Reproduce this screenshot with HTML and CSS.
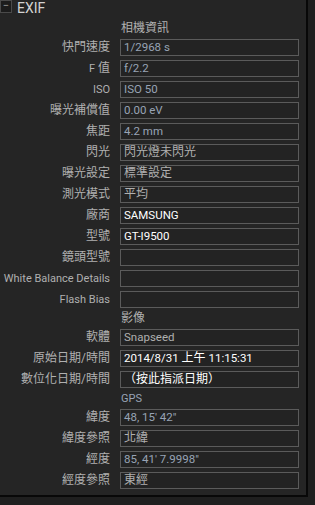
FILE: index.html
```html
<!DOCTYPE html>
<html lang="zh-Hant">
<head>
    <meta charset="UTF-8">
    <title>EXIF</title>
    <link rel="stylesheet" href="styles.css">
</head>
<body>
    <div class="panel">
        <div class="panel-head">
            <span class="toggle">&minus;</span>
            <span class="panel-title">EXIF</span>
        </div>

        <div class="fields">
            <div class="row group-row"><span class="label"></span><span class="group">相機資訊</span></div>
            <div class="row"><span class="label">快門速度</span><span class="box ro">1/2968 s</span></div>
            <div class="row"><span class="label"><span class="en">F</span> 值</span><span class="box ro">f/2.2</span></div>
            <div class="row"><span class="label en">ISO</span><span class="box ro">ISO 50</span></div>
            <div class="row"><span class="label">曝光補償值</span><span class="box ro">0.00 eV</span></div>
            <div class="row"><span class="label">焦距</span><span class="box ro">4.2 mm</span></div>
            <div class="row"><span class="label">閃光</span><span class="box zh">閃光燈未閃光</span></div>
            <div class="row"><span class="label">曝光設定</span><span class="box zh">標準設定</span></div>
            <div class="row"><span class="label">測光模式</span><span class="box zh">平均</span></div>
            <div class="row"><span class="label">廠商</span><span class="box edit">SAMSUNG</span></div>
            <div class="row"><span class="label">型號</span><span class="box edit">GT-I9500</span></div>
            <div class="row"><span class="label">鏡頭型號</span><span class="box"></span></div>
            <div class="row"><span class="label en">White Balance Details</span><span class="box"></span></div>
            <div class="row"><span class="label en">Flash Bias</span><span class="box"></span></div>

            <div class="row group-row"><span class="label"></span><span class="group">影像</span></div>
            <div class="row"><span class="label">軟體</span><span class="box">Snapseed</span></div>
            <div class="row"><span class="label">原始日期/時間</span><span class="box edit">2014/8/31 <span class="zh">上午</span> 11:15:31</span></div>
            <div class="row"><span class="label">數位化日期/時間</span><span class="box edit zh">（按此指派日期）</span></div>

            <div class="row group-row"><span class="label"></span><span class="group ro en">GPS</span></div>
            <div class="row"><span class="label">緯度</span><span class="box ro">48, 15' 42"</span></div>
            <div class="row"><span class="label">緯度參照</span><span class="box zh">北緯</span></div>
            <div class="row"><span class="label">經度</span><span class="box ro">85, 41' 7.9998"</span></div>
            <div class="row"><span class="label">經度參照</span><span class="box zh">東經</span></div>
        </div>
    </div>
</body>
</html>
```

FILE: styles.css
```css
body {
    margin: 0;
    background-color: #1f1f1f;
    font-family: Roboto, "Noto Sans CJK TC", sans-serif;
    font-size: 12px;
    color: #b0b0b0;
}

.panel {
    width: 306px;
    height: 495px;
    background-color: #252525;
    border-right: 2px solid #080808;
    border-bottom: 2px solid #080808;
}

/* Header */
.panel-head {
    display: flex;
    align-items: flex-start;
    height: 18px;
    gap: 5px;
}
.toggle {
    width: 10px;
    height: 11px;
    border: 1px solid #4a4a4a;
    background-color: #1c1c1c;
    color: #9a9a9a;
    font-size: 11px;
    line-height: 10px;
    text-align: center;
}
.panel-title {
    font-size: 14px;
    color: #d2d2d2;
    line-height: 17px;
}

/* Field rows */
.fields {
    display: flex;
    flex-direction: column;
    gap: 4px;
    margin-top: 4px;
}
.row {
    display: flex;
    align-items: center;
    gap: 10px;
    height: 17px;
}
.group-row {
    height: 13px;
}
.label {
    width: 110px;
    flex: none;
    text-align: right;
    white-space: nowrap;
    line-height: 15px;
}
.group {
    padding-left: 1px;
    line-height: 13px;
}
.box {
    box-sizing: border-box;
    width: 179px;
    height: 17px;
    border: 1px solid #5b5b5b;
    background-color: #232323;
    padding: 0 3px;
    font-size: 11.5px;
    line-height: 15px;
    white-space: nowrap;
    overflow: hidden;
}

/* Latin text runs a little narrower than the CJK glyphs */
.en {
    font-size: 11px;
}
.zh {
    font-size: 12px;
}

/* Read-only numeric values */
.ro {
    color: #98a3b5;
}

/* Editable values */
.edit {
    color: #ffffff;
}
```
